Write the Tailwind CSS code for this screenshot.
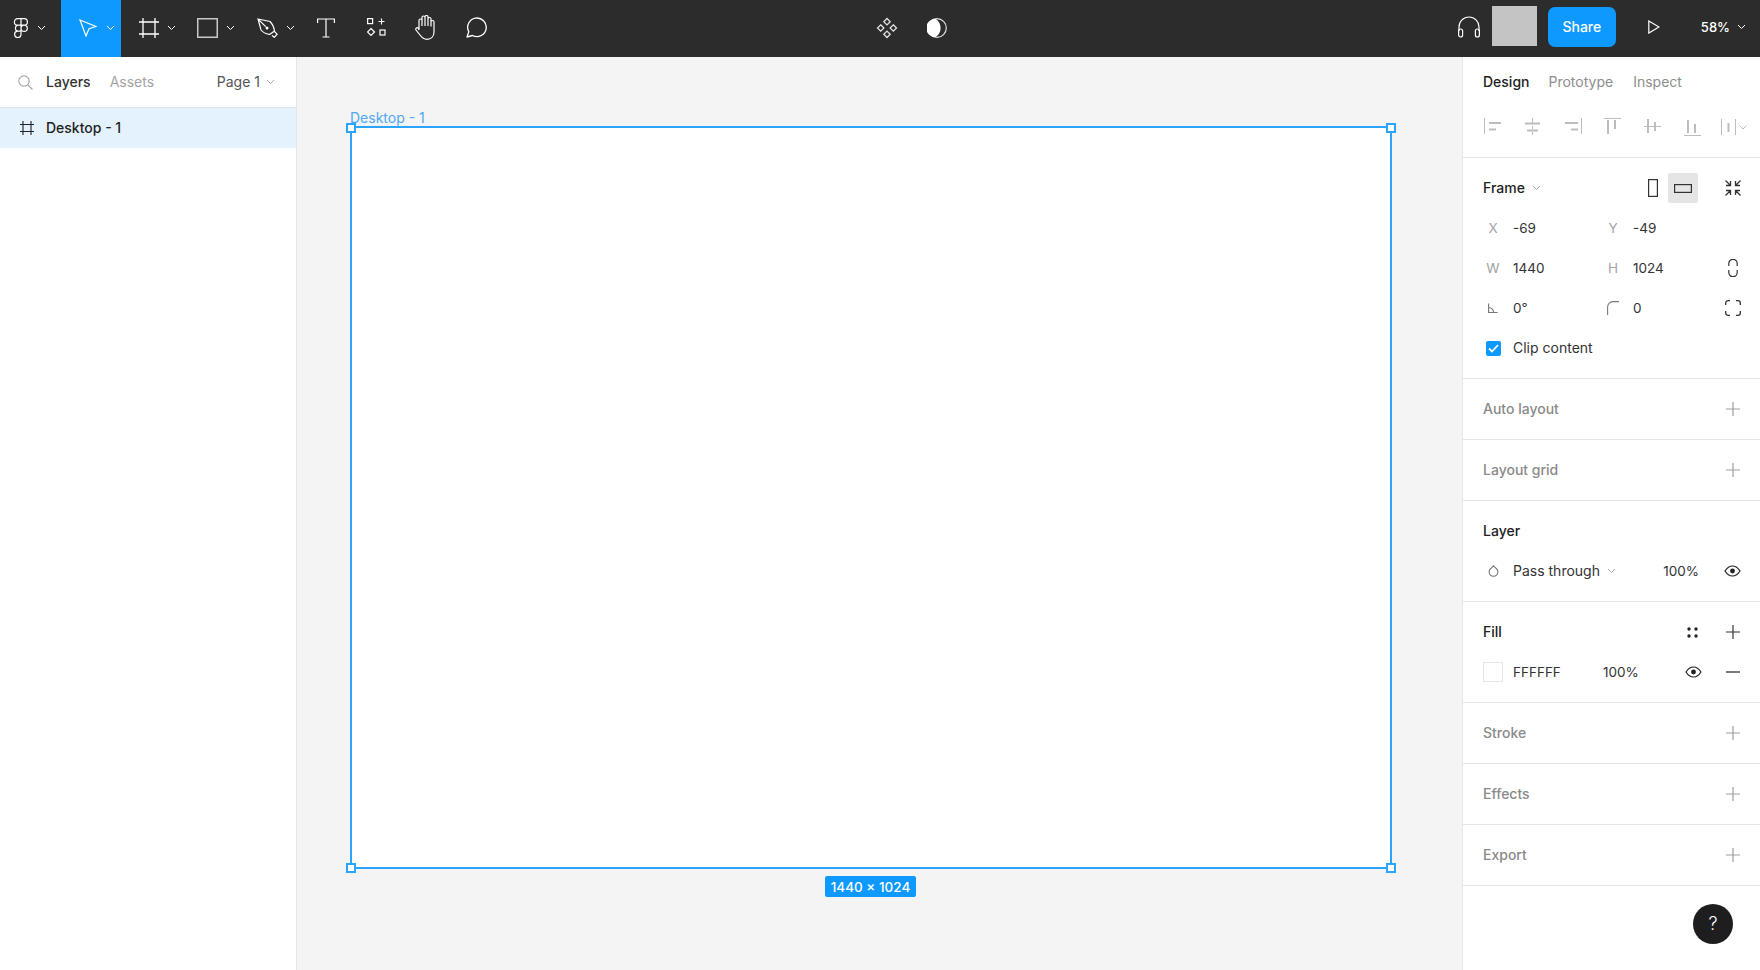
<!DOCTYPE html>
<html lang="en">
<head>
<meta charset="utf-8">
<title>Figma</title>
<script src="https://cdn.jsdelivr.net/npm/@tailwindcss/browser@4"></script>
</head>
<body class="m-0 h-[970px] w-[1760px] overflow-hidden bg-[#f4f4f4] font-['Inter','Liberation_Sans',sans-serif] text-[14px] leading-[20px] text-[#333333]">

<!-- Toolbar -->
<header class="flex h-[57px] items-center bg-[#2c2c2c] text-white">
  <div class="flex h-full w-[61px] items-center pb-[2px] pl-[13px]">
    <svg width="16" height="20" viewBox="0 0 16 20" fill="none" stroke="#fff" stroke-width="1.2"><path d="M8 .7H4.600a3.200 3.200 0 0 0 0 6.400H8zM8 .7h3.200a3.200 3.200 0 0 1 0 6.400H8zM8 7.100H4.600a3.200 3.200 0 0 0 0 6.100H8zM8 10.200a3.100 3.100 0 1 0 6.300 0 3.100 3.100 0 0 0-6.300 0zM8 13.200H4.600a3.200 3.200 0 1 0 3.400 3.100z"/></svg>
    <svg class="ml-[8px]" width="9" height="6" viewBox="0 0 9 6" fill="none" stroke="#fff"><path d="M1 1l3.500 3.500L8 1"/></svg>
  </div>
  <div class="flex h-full w-[60px] items-center bg-[#0d99ff] pb-[2px] pl-[18px]">
    <svg width="18" height="18" viewBox="0 0 18 18" fill="none" stroke="#fff" stroke-width="1.200"><path d="M1 1l16 6.500-7 2.200-3 7.300z"/></svg>
    <svg class="ml-[9px]" width="9" height="6" viewBox="0 0 9 6" fill="none" stroke="#fff"><path d="M1 1l3.500 3.500L8 1"/></svg>
  </div>
  <div class="flex h-full w-[59px] items-center pb-[2px] pl-[18px]">
    <svg width="20" height="20" viewBox="0 0 20 20" fill="none" stroke="#fff" stroke-width="1.300"><path d="M4 0v20M16 0v20M0 4h20M0 16h20"/></svg>
    <svg class="ml-[8px]" width="9" height="6" viewBox="0 0 9 6" fill="none" stroke="#fff"><path d="M1 1l3.500 3.500L8 1"/></svg>
  </div>
  <div class="flex h-full w-[60px] items-center pb-[2px] pl-[17px]">
    <svg width="21" height="20" viewBox="0 0 21 20" fill="none" stroke="#c8c8c8" stroke-width="1.500"><rect x=".75" y=".75" width="19.500" height="18.500"/></svg>
    <svg class="ml-[8px]" width="9" height="6" viewBox="0 0 9 6" fill="none" stroke="#fff"><path d="M1 1l3.500 3.500L8 1"/></svg>
  </div>
  <div class="flex h-full w-[59px] items-center pb-[2px] pl-[17px]">
    <svg width="21" height="20" viewBox="0 0 21 20" fill="none" stroke="#fff" stroke-width="1.200"><path d="M1 1l12 2.500c3 3 4 6 4.500 9.500l-5 3.500c-3.500-.7-6.500-2-8.500-4.500zM1 1l7.700 7.700M15 17.500l2.300 1.800 2.800-3.100-2.600-2.700"/><circle cx="10" cy="10" r="1.500" fill="#fff" stroke="none"/></svg>
    <svg class="ml-[8px]" width="9" height="6" viewBox="0 0 9 6" fill="none" stroke="#fff"><path d="M1 1l3.500 3.500L8 1"/></svg>
  </div>
  <div class="flex h-full w-[68px] items-center pb-[2px] pl-[18px]">
    <svg width="18" height="20" viewBox="0 0 18 20" fill="none" stroke="#fff" stroke-width="1.200"><path d="M.6 5V1h16.800v4M9 1v18M5.500 19h7"/></svg>
  </div>
  <div class="flex h-full w-[48px] items-center pb-[2px]">
    <svg width="19" height="19" viewBox="0 0 19 19" fill="none" stroke="#fff" stroke-width="1.200"><rect x=".6" y=".6" width="5" height="5"/><path d="M14.500.5v6M11.500 3.500h6"/><rect x="13" y="12" width="5" height="5"/><path d="M4 10.500l3.500 3.500L4 17.500.5 14z"/></svg>
  </div>
  <div class="flex h-full w-[50px] items-center pb-[2px]">
    <svg width="23" height="25" viewBox="0 0 23 25" fill="none" stroke="#fff" stroke-width="1.200"><path d="M4 15V5.500a1.500 1.500 0 0 1 3 0V11M7 11V2.500a1.500 1.500 0 0 1 3 0V11M10 11V2a1.500 1.500 0 0 1 3 0v9M13 11V4a1.500 1.500 0 0 1 3 0v7.500M16 7a1.500 1.500 0 0 1 3 0v10c0 4.500-3 7.300-7 7.300-3.500 0-5-1.500-7-4.300l-4-5c-.8-1.500 1-3 2.300-2L4 15"/></svg>
  </div>
  <div class="flex h-full w-[24px] items-center pb-[2px]">
    <svg width="23" height="21" viewBox="0 0 23 21" fill="none" stroke="#fff" stroke-width="1.300"><path d="M2 20l1.800-5.200A9.300 9.300 0 1 1 7.500 18.500z" stroke-linejoin="round"/></svg>
  </div>
  <div class="flex h-full w-[458px] items-center pb-[2px] pl-[387px]">
    <svg class="shrink-0" width="22" height="22" viewBox="0 0 22 22" fill="none" stroke="#e0e0e0" stroke-width="1.300"><path d="M11 1.500l3.200 3.200L11 7.900 7.800 4.700zM4.700 7.800l3.200 3.200-3.200 3.200L1.500 11zM17.300 7.800l3.200 3.200-3.200 3.200-3.200-3.200zM11 14.100l3.200 3.200-3.200 3.200-3.200-3.200z"/></svg>
    <svg class="ml-[29px] shrink-0" width="20" height="20" viewBox="0 0 20 20"><circle cx="10" cy="10" r="9.300" fill="none" stroke="#e0e0e0" stroke-width="1.200"/><path d="M8.500.7A9.300 9.300 0 0 0 8.500 19.300 11 11 0 0 0 8.500.7z" fill="#fff"/></svg>
  </div>
  <div class="ml-auto flex h-full items-center pb-[5px]">
    <svg class="mt-[1px]" width="24" height="22" viewBox="0 0 24 22" fill="none" stroke="#fff" stroke-width="1.200"><path d="M2 15V11a10 10 0 0 1 20 0v4"/><rect x="1.600" y="13" width="4" height="8" rx="2"/><rect x="18.400" y="13" width="4" height="8" rx="2"/></svg>
    <div class="ml-[11px] h-[40px] w-[45px] bg-[#c4c4c4]"></div>
    <button class="ml-[11px] mt-[2px] h-[40px] w-[68px] rounded-[7px] bg-[#0d99ff] pb-[1px] text-[14px] font-medium text-white">Share</button>
    <svg class="ml-[32px] mt-[2px]" width="12" height="14" viewBox="0 0 12 14" fill="none" stroke="#fff" stroke-width="1.200"><path d="M.8.900L11 7 .8 13.100z"/></svg>
    <span class="ml-[41px] mt-[2px] text-[13px] font-medium">58%</span>
    <svg class="ml-[7px] mr-[14px] mt-[2px]" width="9" height="6" viewBox="0 0 9 6" fill="none" stroke="#fff"><path d="M1 1l3.500 3.500L8 1"/></svg>
  </div>
</header>

<div class="flex h-[913px]">
  <!-- Left panel -->
  <aside class="h-full w-[297px] shrink-0 border-r border-[#e5e5e5] bg-white">
    <div class="flex h-[51px] items-center border-b border-[#e5e5e5] pr-[21px]">
      <svg class="ml-[18px]" width="15" height="15" viewBox="0 0 15 15" fill="none" stroke="#a8a8a8" stroke-width="1.200"><circle cx="6" cy="6" r="5.200"/><path d="M9.800 9.800L14.500 14.500"/></svg>
      <span class="ml-[13px] font-medium text-[#333333]">Layers</span>
      <span class="ml-[19px] text-[#a3a3a3]">Assets</span>
      <span class="ml-auto text-[#555555]">Page 1</span>
      <svg class="ml-[6px]" width="9" height="6" viewBox="0 0 9 6" fill="none" stroke="#aaaaaa"><path d="M1 1l3.500 3.500L8 1"/></svg>
    </div>
    <div class="flex h-[40px] items-center bg-[#e4f2fd]">
      <svg class="ml-[20px]" width="14" height="14" viewBox="0 0 14 14" fill="none" stroke="#222222" stroke-width="1.100"><path d="M3 0v14M11 0v14M0 3.500h14M0 10.500h14"/></svg>
      <span class="ml-[12px] font-medium text-[#222222]">Desktop - 1</span>
    </div>
  </aside>

  <!-- Canvas -->
  <main class="relative flex-1 bg-[#f4f4f4]">
    <span class="absolute left-[53px] top-[52px] text-[14px] leading-[17px] text-[#4fa8f5]">Desktop - 1</span>
    <div class="absolute left-[53px] top-[69px] h-[743px] w-[1042px] border-2 border-[#2ba4ff] bg-white"></div>
    <div class="absolute left-[49px] top-[66px] h-[10px] w-[10px] border-2 border-[#2ba4ff] bg-white"></div>
    <div class="absolute left-[1089px] top-[66px] h-[10px] w-[10px] border-2 border-[#2ba4ff] bg-white"></div>
    <div class="absolute left-[49px] top-[806px] h-[10px] w-[10px] border-2 border-[#2ba4ff] bg-white"></div>
    <div class="absolute left-[1089px] top-[806px] h-[10px] w-[10px] border-2 border-[#2ba4ff] bg-white"></div>
    <div class="absolute left-[528px] top-[819px] flex h-[21px] w-[91px] items-center justify-center rounded-[2px] bg-[#0d99ff] text-[13.500px] font-medium text-white">1440 × 1024</div>
  </main>

  <!-- Right panel -->
  <aside class="relative h-full w-[298px] shrink-0 border-l border-[#e5e5e5] bg-white">
    <section class="h-[101px] border-b border-[#e5e5e5]">
      <div class="flex h-[50px] items-center pl-[20px]">
        <span class="font-medium text-[#222222]">Design</span>
        <span class="ml-[19px] text-[#8e8e8e]">Prototype</span>
        <span class="ml-[20px] text-[#8e8e8e]">Inspect</span>
      </div>
      <div class="flex h-[40px] items-center pl-[20px]">
        <svg width="265" height="20" viewBox="1483 117 265 20" fill="none" stroke="#bdbdbd">
          <path d="M1484.500 118v16"/><path stroke-width="2" d="M1489 123h12M1489 129.500h7"/>
          <path d="M1532.500 118v5M1532.500 126v3M1532.500 132v3"/><path stroke-width="2" d="M1525 123.500h15M1527 130.500h11"/>
          <path d="M1581.500 118v16"/><path stroke-width="2" d="M1565 123h13M1571 129.500h7"/>
          <path d="M1604 118.500h17"/><path stroke-width="2" d="M1608 120v14M1615 120v9"/>
          <path d="M1644 126.500h17"/><path stroke-width="2" d="M1648 119v14M1655 122v9"/>
          <path d="M1684 135.500h17"/><path stroke-width="2" d="M1688 120v13M1695 124v9"/>
          <path d="M1721.500 119v16M1735.500 119v16"/><path stroke-width="2" d="M1728.500 123v9"/>
          <path d="M1739.500 125.500l3.500 3.500 3.500-3.500"/>
        </svg>
      </div>
    </section>

    <section class="h-[221px] border-b border-[#e5e5e5] pt-[10px]">
      <div class="flex h-[40px] items-center pl-[20px] pr-[19px]">
        <span class="font-medium text-[#222222]">Frame</span>
        <svg class="ml-[7px]" width="9" height="6" viewBox="0 0 9 6" fill="none" stroke="#aaaaaa"><path d="M1 1l3.500 3.500L8 1"/></svg>
        <svg class="ml-auto" width="10" height="18" viewBox="0 0 10 18" fill="none" stroke="#333333" stroke-width="1.200"><rect x=".6" y=".6" width="8.800" height="16.800"/></svg>
        <div class="ml-[10px] flex h-[30px] w-[30px] items-center justify-center rounded-[2px] bg-[#e5e5e5]">
          <svg width="18" height="9" viewBox="0 0 18 9" fill="none" stroke="#333333" stroke-width="1.200"><rect x=".6" y=".6" width="16.800" height="7.800"/></svg>
        </div>
        <svg class="ml-[27px]" width="16" height="16" viewBox="0 0 16 16" fill="none" stroke="#333333" stroke-width="1.300"><path d="M.5.500L5 5M5.500 1v4.500H1M15.500.500L11 5M10.500 1v4.500H15M.5 15.500L5 11M5.500 15v-4.500H1M15.500 15.500L11 11M10.500 15v-4.500H15"/></svg>
      </div>
      <div class="flex h-[40px] items-center pl-[20px] text-[13.500px]">
        <span class="w-[20px] text-center text-[#a3a3a3]">X</span><span class="ml-[10px] w-[90px] text-[#333333]">-69</span>
        <span class="w-[20px] text-center text-[#a3a3a3]">Y</span><span class="ml-[10px] text-[#333333]">-49</span>
      </div>
      <div class="flex h-[40px] items-center pl-[20px] pr-[22px] text-[13.500px]">
        <span class="w-[20px] text-center text-[#a3a3a3]">W</span><span class="ml-[10px] w-[90px] text-[#333333]">1440</span>
        <span class="w-[20px] text-center text-[#a3a3a3]">H</span><span class="ml-[10px] text-[#333333]">1024</span>
        <svg class="ml-auto" width="10" height="18" viewBox="0 0 10 18" fill="none" stroke="#333333" stroke-width="1.200"><path d="M.8 7V4.500a4.200 4.200 0 0 1 8.400 0V7M.8 11v2.500a4.200 4.200 0 0 0 8.400 0V11"/></svg>
      </div>
      <div class="flex h-[40px] items-center pl-[20px] pr-[19px] text-[13.500px]">
        <span class="flex w-[20px] justify-center"><svg width="10" height="10" viewBox="0 0 10 10" fill="none" stroke="#777777" stroke-width="1.100"><path d="M.6.500v9h9M.6 4.500a5 5 0 0 1 5 5"/></svg></span><span class="ml-[10px] w-[90px] text-[#333333]">0°</span>
        <span class="flex w-[20px] justify-center"><svg width="12" height="14" viewBox="0 0 12 14" fill="none" stroke="#777777" stroke-width="1.100"><path d="M.6 14V6A5.500 5.500 0 0 1 6 .6h6"/></svg></span><span class="ml-[10px] text-[#333333]">0</span>
        <svg class="ml-auto" width="16" height="16" viewBox="0 0 16 16" fill="none" stroke="#333333" stroke-width="1.300"><path d="M.7 5V3A2.300 2.300 0 0 1 3 .7h2M11 .7h2A2.300 2.300 0 0 1 15.300 3v2M15.300 11v2a2.300 2.300 0 0 1-2.300 2.300h-2M5 15.300H3A2.300 2.300 0 0 1 .7 13v-2"/></svg>
      </div>
      <div class="flex h-[40px] items-center pl-[23px]">
        <span class="flex h-[15px] w-[15px] items-center justify-center rounded-[2px] bg-[#0d99ff]"><svg width="11" height="9" viewBox="0 0 11 9" fill="none" stroke="#fff" stroke-width="1.800"><path d="M1 4.500l3 3L10 1"/></svg></span>
        <span class="ml-[12px] text-[#333333]">Clip content</span>
      </div>
    </section>

    <section class="flex h-[61px] items-center justify-between border-b border-[#e5e5e5] pl-[20px] pr-[20px]">
      <span class="font-medium text-[#8a8a8a]">Auto layout</span>
      <svg width="14" height="14" viewBox="0 0 14 14" fill="none" stroke="#a0a0a0" stroke-width="1.200"><path d="M7 0v14M0 7h14"/></svg>
    </section>
    <section class="flex h-[61px] items-center justify-between border-b border-[#e5e5e5] pl-[20px] pr-[20px]">
      <span class="font-medium text-[#8a8a8a]">Layout grid</span>
      <svg width="14" height="14" viewBox="0 0 14 14" fill="none" stroke="#a0a0a0" stroke-width="1.200"><path d="M7 0v14M0 7h14"/></svg>
    </section>

    <section class="h-[101px] border-b border-[#e5e5e5]">
      <div class="flex h-[60px] items-center pl-[20px]"><span class="font-medium text-[#222222]">Layer</span></div>
      <div class="flex h-[20px] items-center pl-[20px] pr-[19px]">
        <span class="flex w-[20px] justify-center"><svg width="11" height="12" viewBox="0 0 11 12" fill="none" stroke="#777777" stroke-width="1.100"><path d="M5.500.8l2.500 2.500a4.400 4.400 0 1 1-5 0z"/></svg></span>
        <span class="ml-[10px] text-[#333333]">Pass through</span>
        <svg class="ml-[7px]" width="9" height="6" viewBox="0 0 9 6" fill="none" stroke="#aaaaaa"><path d="M1 1l3.500 3.500L8 1"/></svg>
        <span class="ml-auto text-[13.500px] text-[#333333]">100%</span>
        <svg class="ml-[25px]" width="17" height="12" viewBox="0 0 17 12" fill="none" stroke="#222222" stroke-width="1.200"><path d="M1 6c2-3.200 4.500-5 7.500-5S14 2.800 16 6c-2 3.200-4.500 5-7.500 5S3 9.200 1 6z"/><circle cx="8.500" cy="6" r="2.400" fill="#222222" stroke="none"/></svg>
      </div>
    </section>

    <section class="h-[101px] border-b border-[#e5e5e5]">
      <div class="flex h-[60px] items-center pl-[20px] pr-[20px]">
        <span class="font-medium text-[#222222]">Fill</span>
        <svg class="ml-auto" width="11" height="11" viewBox="0 0 11 11" fill="#222222"><circle cx="2" cy="2" r="1.700"/><circle cx="9" cy="2" r="1.700"/><circle cx="2" cy="9" r="1.700"/><circle cx="9" cy="9" r="1.700"/></svg>
        <svg class="ml-[28px]" width="14" height="14" viewBox="0 0 14 14" fill="none" stroke="#333333" stroke-width="1.200"><path d="M7 0v14M0 7h14"/></svg>
      </div>
      <div class="flex h-[20px] items-center pl-[20px] pr-[20px] text-[13.500px]">
        <span class="h-[20px] w-[20px] border border-[#e5e5e5] bg-white"></span>
        <span class="ml-[10px] w-[90px] text-[#333333]">FFFFFF</span>
        <span class="text-[#333333]">100%</span>
        <svg class="ml-auto" width="17" height="12" viewBox="0 0 17 12" fill="none" stroke="#222222" stroke-width="1.200"><path d="M1 6c2-3.200 4.500-5 7.500-5S14 2.800 16 6c-2 3.200-4.500 5-7.500 5S3 9.200 1 6z"/><circle cx="8.500" cy="6" r="2.400" fill="#222222" stroke="none"/></svg>
        <svg class="ml-[24px]" width="14" height="2" viewBox="0 0 14 2" fill="none" stroke="#333333" stroke-width="1.300"><path d="M0 1h14"/></svg>
      </div>
    </section>

    <section class="flex h-[61px] items-center justify-between border-b border-[#e5e5e5] pl-[20px] pr-[20px]">
      <span class="font-medium text-[#8a8a8a]">Stroke</span>
      <svg width="14" height="14" viewBox="0 0 14 14" fill="none" stroke="#a0a0a0" stroke-width="1.200"><path d="M7 0v14M0 7h14"/></svg>
    </section>
    <section class="flex h-[61px] items-center justify-between border-b border-[#e5e5e5] pl-[20px] pr-[20px]">
      <span class="font-medium text-[#8a8a8a]">Effects</span>
      <svg width="14" height="14" viewBox="0 0 14 14" fill="none" stroke="#a0a0a0" stroke-width="1.200"><path d="M7 0v14M0 7h14"/></svg>
    </section>
    <section class="flex h-[61px] items-center justify-between border-b border-[#e5e5e5] pl-[20px] pr-[20px]">
      <span class="font-medium text-[#8a8a8a]">Export</span>
      <svg width="14" height="14" viewBox="0 0 14 14" fill="none" stroke="#a0a0a0" stroke-width="1.200"><path d="M7 0v14M0 7h14"/></svg>
    </section>

    <button class="absolute left-[230px] top-[847px] flex h-[40px] w-[40px] items-center justify-center rounded-full bg-[#1e1e1e] text-[18px] font-light text-white">?</button>
  </aside>
</div>
</body>
</html>
